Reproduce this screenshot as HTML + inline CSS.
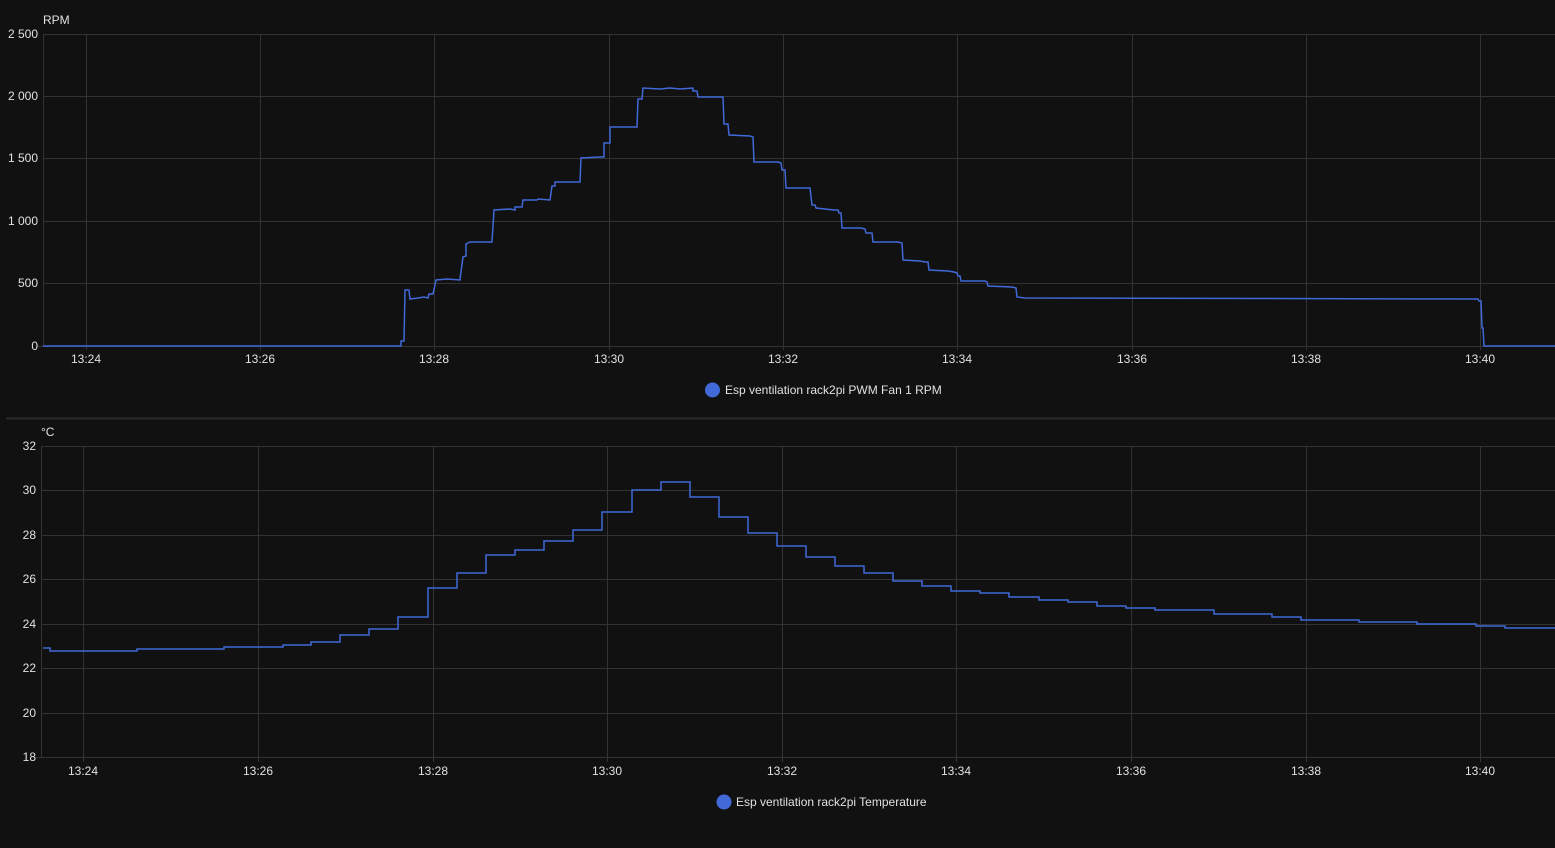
<!DOCTYPE html>
<html><head><meta charset="utf-8"><style>
html,body{margin:0;padding:0;background:#111111;}
svg{display:block;}
text{font-family:"Liberation Sans",sans-serif;fill:#e1e1e1;font-size:12px;}
</style></head><body>
<svg width="1555" height="848" viewBox="0 0 1555 848" xmlns="http://www.w3.org/2000/svg">
<rect width="1555" height="848" fill="#111111"/>
<!-- TOP CHART -->
<g stroke="#333333" stroke-width="1">
<line x1="43" y1="34.5" x2="1555" y2="34.5"/>
<line x1="43" y1="96.5" x2="1555" y2="96.5"/>
<line x1="43" y1="158.5" x2="1555" y2="158.5"/>
<line x1="43" y1="221.5" x2="1555" y2="221.5"/>
<line x1="43" y1="283.5" x2="1555" y2="283.5"/>
<line x1="38" y1="346.5" x2="1555" y2="346.5"/>
<line x1="43.5" y1="34" x2="43.5" y2="346"/>
<line x1="86.5" y1="34" x2="86.5" y2="350"/>
<line x1="260.5" y1="34" x2="260.5" y2="350"/>
<line x1="434.5" y1="34" x2="434.5" y2="350"/>
<line x1="609.5" y1="34" x2="609.5" y2="350"/>
<line x1="783.5" y1="34" x2="783.5" y2="350"/>
<line x1="957.5" y1="34" x2="957.5" y2="350"/>
<line x1="1132.5" y1="34" x2="1132.5" y2="350"/>
<line x1="1306.5" y1="34" x2="1306.5" y2="350"/>
<line x1="1480.5" y1="34" x2="1480.5" y2="350"/>
</g>
<text x="43" y="24">RPM</text>
<g text-anchor="end">
<text x="38" y="38">2 500</text>
<text x="38" y="100">2 000</text>
<text x="38" y="162">1 500</text>
<text x="38" y="225">1 000</text>
<text x="38" y="287">500</text>
<text x="38" y="350">0</text>
</g>
<g text-anchor="middle">
<text x="86" y="363">13:24</text><text x="260" y="363">13:26</text><text x="434" y="363">13:28</text>
<text x="609" y="363">13:30</text><text x="783" y="363">13:32</text><text x="957" y="363">13:34</text>
<text x="1132" y="363">13:36</text><text x="1306" y="363">13:38</text><text x="1480" y="363">13:40</text>
</g>
<polyline fill="none" stroke="#4169d8" stroke-width="1.5" points="43,346 401,346 401,341 404,341 405,290 409,290 410,299 418,298 424,297 428,298 429,294 433,294 436,280 447,279 460,280 460,279 463,257 466,256 466,244 470,242 492,242 494,210 510,209 515,210 515,207 522,207 523,200 537,200 538,199 550,200 552,186 555,186 555,182 580,182 581,158 600,157 604,157 604,143 610,143 610,127 637,127 638,99 642,99 643,88 660,89 670,88 680,89 693,88 693,91 697,91 698,97 723,97 724,124 728,124 729,135 750,136 753,137 754,162 778,162 781,163 782,170 785,170 786,188 810,188 812,205 815,205 816,208 834,210 838,210 839,213 841,213 842,228 861,228 865,229 866,233 872,233 873,242 898,242 902,243 903,260 920,261 925,262 928,262 929,270 948,271 954,272 957,273 958,276 960,276 961,281 985,281 987,282 988,286 1012,287 1016,288 1017,297 1025,298 1478,299 1479,301 1481,301 1482,328 1483,328 1484,346 1555,346"/>
<circle cx="712.5" cy="390" r="7.5" fill="#4169d8"/>
<text x="725" y="394">Esp ventilation rack2pi PWM Fan 1 RPM</text>
<rect x="6" y="417.5" width="1549" height="2" fill="#2a2a2a"/>
<!-- BOTTOM CHART -->
<g stroke="#333333" stroke-width="1">
<line x1="41" y1="446.5" x2="1555" y2="446.5"/>
<line x1="41" y1="490.5" x2="1555" y2="490.5"/>
<line x1="41" y1="535.5" x2="1555" y2="535.5"/>
<line x1="41" y1="579.5" x2="1555" y2="579.5"/>
<line x1="41" y1="624.5" x2="1555" y2="624.5"/>
<line x1="41" y1="668.5" x2="1555" y2="668.5"/>
<line x1="41" y1="713.5" x2="1555" y2="713.5"/>
<line x1="36" y1="757.5" x2="1555" y2="757.5"/>
<line x1="41.5" y1="446" x2="41.5" y2="757"/>
<line x1="83.5" y1="446" x2="83.5" y2="762"/>
<line x1="258.5" y1="446" x2="258.5" y2="762"/>
<line x1="433.5" y1="446" x2="433.5" y2="762"/>
<line x1="607.5" y1="446" x2="607.5" y2="762"/>
<line x1="782.5" y1="446" x2="782.5" y2="762"/>
<line x1="956.5" y1="446" x2="956.5" y2="762"/>
<line x1="1131.5" y1="446" x2="1131.5" y2="762"/>
<line x1="1306.5" y1="446" x2="1306.5" y2="762"/>
<line x1="1480.5" y1="446" x2="1480.5" y2="762"/>
</g>
<text x="41" y="436">°C</text>
<g text-anchor="end">
<text x="36" y="450">32</text><text x="36" y="494">30</text><text x="36" y="539">28</text>
<text x="36" y="583">26</text><text x="36" y="628">24</text><text x="36" y="672">22</text>
<text x="36" y="717">20</text><text x="36" y="761">18</text>
</g>
<g text-anchor="middle">
<text x="83" y="775">13:24</text><text x="258" y="775">13:26</text><text x="433" y="775">13:28</text>
<text x="607" y="775">13:30</text><text x="782" y="775">13:32</text><text x="956" y="775">13:34</text>
<text x="1131" y="775">13:36</text><text x="1306" y="775">13:38</text><text x="1480" y="775">13:40</text>
</g>
<polyline fill="none" stroke="#4169d8" stroke-width="1.5" points="43,648 50,648 50,651 137,651 137,649 224,649 224,647 283,647 283,645 311,645 311,642 340,642 340,635 369,635 369,629 398,629 398,617 428,617 428,588 457,588 457,573 486,573 486,555 515,555 515,550 544,550 544,541 573,541 573,530 602,530 602,512 632,512 632,490 661,490 661,482 690,482 690,497 719,497 719,517 748,517 748,533 777,533 777,546 806,546 806,557 835,557 835,566 864,566 864,573 893,573 893,581 922,581 922,586 951,586 951,591 980,591 980,593 1009,593 1009,597 1039,597 1039,600 1068,600 1068,602 1097,602 1097,606 1126,606 1126,608 1155,608 1155,610 1214,610 1214,614 1272,614 1272,617 1301,617 1301,620 1359,620 1359,622 1417,622 1417,624 1476,624 1476,626 1505,626 1505,628 1555,628"/>
<circle cx="724" cy="802" r="7.5" fill="#4169d8"/>
<text x="736" y="806">Esp ventilation rack2pi Temperature</text>
</svg>
</body></html>
